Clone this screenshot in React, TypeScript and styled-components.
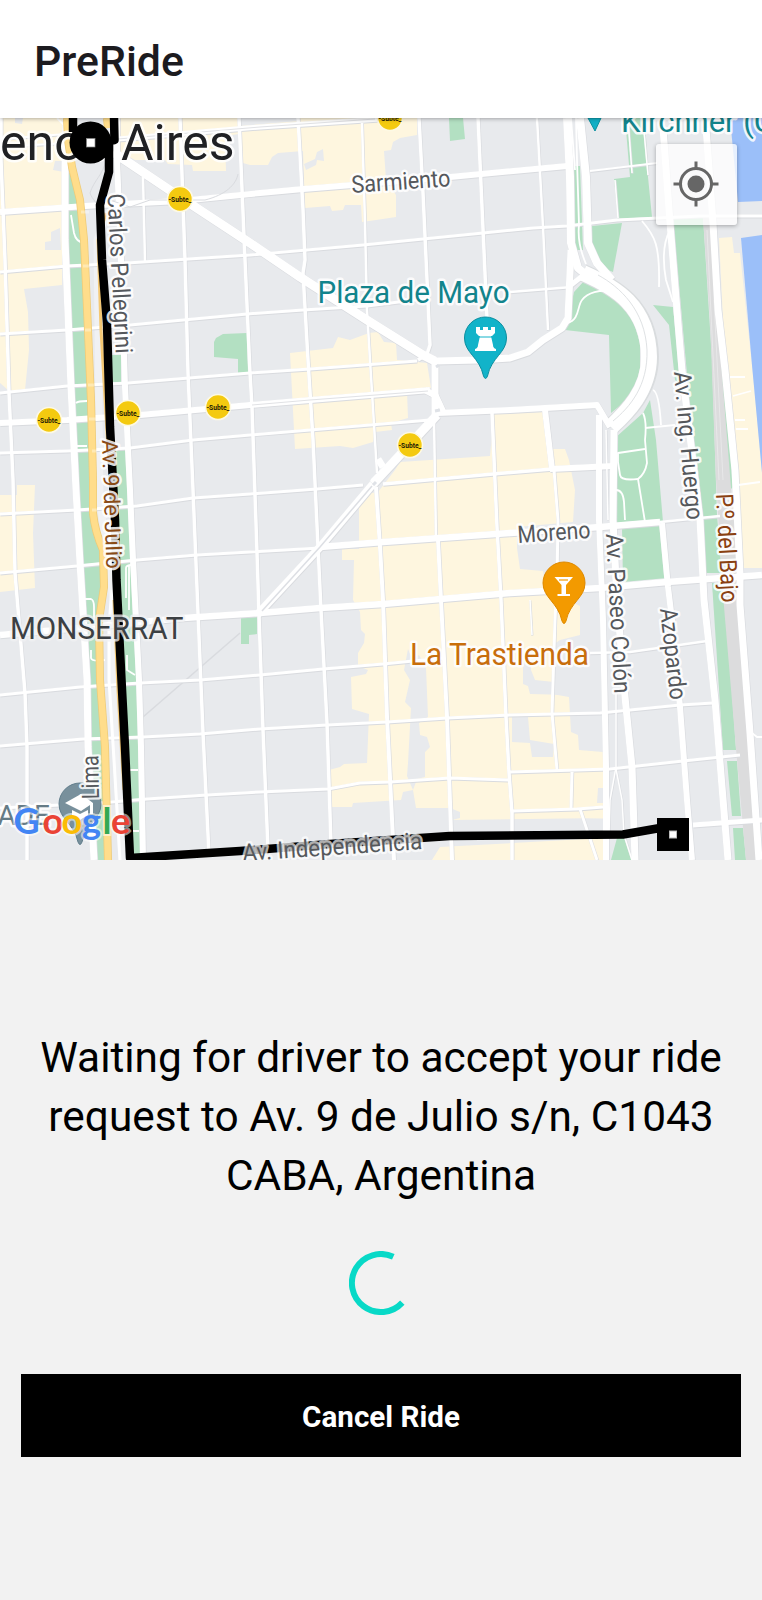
import React from "react";
import styled, { createGlobalStyle } from "styled-components";

const GlobalStyle = createGlobalStyle`
  * { box-sizing: border-box; }
  body { margin: 0; background: #f2f2f2; font-family: Roboto, "Liberation Sans", sans-serif; }
`;

const Screen = styled.main`
  display: flex;
  flex-direction: column;
  width: 762px;
  height: 1600px;
  overflow: hidden;
  background: #f2f2f2;
`;

const Header = styled.header`
  display: flex;
  align-items: center;
  flex: none;
  height: 118px;
  padding: 4px 34px 0;
  background: #fff;
  box-shadow: 0 1px 4px rgba(0, 0, 0, 0.3);
  z-index: 1;
`;

const Title = styled.h1`
  margin: 0;
  font-size: 42.8px;
  font-weight: 500;
  color: #1c1b1f;
`;

const MapPane = styled.section`
  position: relative;
  flex: none;
  height: 742px;
  overflow: hidden;
`;

const MapCanvas = styled.svg`
  display: block;
  width: 762px;
  height: 742px;
`;

const LocateButton = styled.button`
  position: absolute;
  top: 26px;
  right: 25px;
  width: 81px;
  height: 81px;
  padding: 0 1px 1px 0;
  display: flex;
  align-items: center;
  justify-content: center;
  border: 0;
  border-radius: 3px;
  background: rgba(255, 255, 255, 0.76);
  box-shadow: 0 1px 4px rgba(0, 0, 0, 0.3);
`;

const Panel = styled.section`
  display: flex;
  flex-direction: column;
  align-items: center;
  flex: 1;
  padding: 168px 21px 0;
`;

const Message = styled.p`
  margin: 0 0 46px;
  width: 700px;
  font-size: 42.4px;
  line-height: 59px;
  text-align: center;
  color: #000;
`;

const Spinner = styled.svg`
  display: block;
  width: 64px;
  height: 64px;
  margin-bottom: 59px;
`;

const CancelButton = styled.button`
  align-self: stretch;
  height: 83px;
  border: 0;
  padding: 3px 0 0;
  background: #000;
  color: #fff;
  font: 700 29.6px Roboto, "Liberation Sans", sans-serif;
`;

const Label = styled.text<{ $size?: number; $color?: string; $halo?: string }>`
  font-family: Roboto, "Liberation Sans", sans-serif;
  font-size: ${(p) => p.$size ?? 24}px;
  fill: ${(p) => p.$color ?? "#55585c"};
  stroke: ${(p) => p.$halo ?? "rgba(255,255,255,0.85)"};
  stroke-width: 5px;
  stroke-linejoin: round;
  paint-order: stroke;
`;

const StopText = styled.text`
  font: 700 8px Roboto, sans-serif;
  fill: #1d1a05;
`;

const LogoText = styled.text`
  font: 700 36px Lato, sans-serif;
  stroke: rgba(255, 255, 255, 0.55);
  stroke-width: 4px;
  paint-order: stroke;
`;

const YELLOW = "#fef6df";
const GREEN = "#b3e0c2";
const GREY = "#e8eaed";
const RAIL = "#dcdcdd";
const WATER = "#9bbff9";

const areas: [string, string][] = [
  [YELLOW, "0,118 62,118 62,285 24,289 28,312 29,350 25,390 9,391 0,383"],
  [GREY, "51,232 60,228 61,250 45,250 45,242 51,241"],
  [GREY, "15,118 23,118 22,124 15,123"],
  [GREY, "55,161 64,161 64,172 53,170"],
  [YELLOW, "117,118 417,118 417,135 400,138 393,142 391,150 384,151 386,180 396,195 396,217 376,220 362,222 361,205 345,205 343,210 332,211 330,206 305,208 303,151 278,153 272,157 268,165 250,165 243,163 239,134 225,136 226,171 193,171 192,165 168,164 165,160 135,160 117,150"],
  [GREY, "240,118 300,118 300,121 240,126"],
  [GREY, "323,149 324,161 317,160 316,165 306,170 304,164 315,159 317,152"],
  [YELLOW, "290,353 333,348 338,337 350,340 369,333 378,332 384,342 396,343 397,360 427,363 431,388 407,392 408,418 391,423 392,430 375,432 373,442 353,448 340,446 325,447 295,449"],
  [YELLOW, "395,470 400,462 490,456 494,414 545,412 549,449 565,449 569,460 575,490 573,522 517,527 517,548 520,569 543,571 546,590 580,606 580,635 560,640 553,645 552,694 569,697 571,732 578,735 579,750 603,752 603,860 432,860 440,847 603,838 603,818 452,820 460,818 460,812 450,808 416,808 413,790 403,792 401,800 353,803 352,807 332,807 329,770 340,767 344,764 367,763 369,714 352,709 351,677 366,674 368,670 358,666 358,653 364,643 365,634 361,630 360,612 353,600 354,560 342,560 342,549 359,549 359,495 378,492"],
  [GREY, "408,649 404,670 410,680 405,702 411,708 408,763 407,776 413,790 417,779 425,777 425,752 430,747 427,737 420,735 419,723 428,717 426,668 419,655 412,659"],
  [GREY, "523,660 531,662 531,670 535,680 554,682 570,690 570,695 530,694 528,686 523,684"],
  [GREY, "512,717 528,717 530,740 554,744 553,757 532,757 530,743 512,742"],
  [GREY, "598,788 603,788 603,803 597,803"],
  [YELLOW, "0,495 17,495 17,485 35,485 33,533 35,588 0,592"],
  [YELLOW, "719,238 732,237 734,253 740,253 752,365 762,470 762,568 742,568 725,360"],
  [WATER, "730,118 762,118 762,201 738,202"],
  [WATER, "741,238 762,235 762,473 752,365"],
  [GREEN, "66,173 72,173 82,210 85,300 89,400 93,500 97,530 104,555 103,600 98,625 100,700 106,760 108,860 94,860 88,747 80,563 71,387 67,300"],
  [GREEN, "112,355 121,355 121,382 112,382"],
  [GREEN, "113,450 126,450 130,500 134,560 141,720 141,860 130,860 121,670 115,520"],
  [GREEN, "214,342 216,338 223,334 247,333 248,373 238,373 238,359 214,357"],
  [GREEN, "241,618 257,617 257,634 249,635 249,644 241,644"],
  [GREEN, "449,118 463,118 465,139 450,141"],
  [GREEN, "572,166 580,166 583,250 575,250"],
  [GREEN, "592,226 622,223 613,272 600,267 592,247"],
  [GREEN, "625,118 645,118 648,177 652,217 618,219 614,179 630,177"],
  [GREEN, "585,280 610,292 630,310 640,343 640,375 633,395 611,413 609,335 565,330 574,292"],
  [GREEN, "643,413 650,400 656,440 663,522 615,523 615,438"],
  [GREEN, "622,527 660,525 667,578 623,582"],
  [GREEN, "653,305 673,307 681,385 675,380 669,325"],
  [GREEN, "673,218 703,217 712,360 717,515 722,573 704,573 700,520"],
  [GREEN, "712,583 722,583 727,620 736,750 723,750"],
  [GREEN, "727,761 737,761 741,816 732,816"],
  [GREEN, "733,828 743,828 746,860 735,860"],
  [GREEN, "617,838 625,838 633,860 611,860"],
  [GREEN, "713,300 721,310 735,485 730,490"],
  [RAIL, "703,217 713,220 716,280 718,322 724,400 731,488 740,590 750,750 758,860 746,860 737,760 722,583 716,480 713,400 710,320"],
];

const roads: [number, string][] = [
  [3.5, "1,118 1,160 5,260 9,393 13,480 15,573 25,693 27,747 27,860"],
  [7, "66,118 65,167 65,240 71,387 76,490 80,563 87,680 88,747 94,860"],
  [6, "117,118 117,160 121,260 125,387 130,490 133,560 139,680 141,747 143,860"],
  [2.5, "143,177 145,262"],
  [3.5, "180,118 185,260 188,373 193,490 198,613 203,733 209,855"],
  [3.5, "239,118 245,260 250,373 252,407 257,553 259,615 263,730 268,850"],
  [3.5, "298,118 303,210 305,260 303,273 308,360 313,440 318,547 321,610 327,723 331,845"],
  [2.5, "362,123 365,223 367,310 370,360 377,473"],
  [4, "376,487 380,547 383,600 387,717 394,860"],
  [3.5, "419,118 423,193 430,345 427,354 418,360"],
  [2.5, "434,420 436,540"],
  [4, "438,540 441,600 447,717 452,860"],
  [3.5, "478,118 487,318"],
  [3.5, "492,413 497,527 501,600 506,717 509,773 512,813 512,860"],
  [2.5, "537,118 543,227 548,330"],
  [6, "545,410 552,469"],
  [3, "554,470 558,520 557,580 555,620 552,713 557,770"],
  [1.5, "530,600 532,635"],
  [3, "572,772 571,809"],
  [3, "580,809 597,860"],
  [2, "0,139 66,134"],
  [2, "0,147 66,143"],
  [5, "118,139 260,127 380,119"],
  [6, "0,212 100,205 180,201 260,193 303,189 450,177 567,166"],
  [2, "590,171 657,163"],
  [3, "0,272 67,266 127,263 250,255 363,245 483,233 533,228 567,226 617,220 700,216 762,216"],
  [3, "0,334 67,330 130,325 247,314 303,310 367,306 430,298"],
  [2.5, "510,292 572,287"],
  [3, "0,393 67,386 128,383 250,373 310,369 417,361"],
  [6, "0,423 67,420 140,415 250,405 310,400 430,390"],
  [3, "0,453 67,451 130,448 193,440 250,435 310,430 430,420"],
  [3, "0,514 77,510 137,506 193,498 250,494 317,489 363,485"],
  [3.5, "383,484 493,474 552,469"],
  [6, "550,469 613,466"],
  [3, "0,573 77,566 137,560 197,555 250,552 320,548"],
  [6.5, "320,547 383,542 510,533 600,527 660,522"],
  [2.5, "660,522 720,516"],
  [6.5, "0,635 90,627 183,618 260,613 320,608 383,604 510,593 600,588 667,582 762,575"],
  [3, "0,695 80,687 140,683 200,680 260,675 323,669 383,664 443,658"],
  [2.5, "590,653 630,652 707,641"],
  [3, "0,746 83,739 143,737 200,734 260,729 327,725 387,722 447,718 510,715 600,713 680,705 713,703"],
  [3, "0,808 100,803 147,799 207,795 260,792 328,789 360,783 390,782 450,778 508,780"],
  [3, "510,772 610,769 683,761 740,755"],
  [3, "512,811 577,809 603,807"],
  [5, "693,825 762,820"],
  [9, "113,152 180,197 250,243 300,277 367,320 423,355 435,361"],
  [7, "435,361 435,418"],
  [6, "425,390 436,396 443,411"],
  [7, "435,361 478,360 510,358 528,352 543,340 562,328 568,318 571,250"],
  [6, "437,413 510,410 597,405 610,427"],
  [9, "437,415 373,484"],
  [8, "373,484 320,547 257,615"],
  [8, "567,118 570,177 571,243 578,268 590,278"],
  [8, "580,118 586,177 588,243 597,263 612,280"],
  [5, "571,285 590,270"],
  [6, "599,415 599,520 603,620 606,767 606,860"],
  [7, "614,430 613,520 617,600 625,697 632,767 635,860"],
  [1.5, "606,430 608,520"],
  [1.5, "616,693 616,767 610,800 609,835"],
  [1.5, "616,769 622,800 624,835 632,860"],
  [6, "662,523 668,587 672,620 680,707 687,800 692,860"],
  [7, "663,128 670,223 678,323 682,370 700,520 704,600 715,700 722,787 728,860"],
  [7, "706,128 713,223 718,310 725,370 735,470 740,573 740,605 750,733 759,860"],
  [1.5, "643,120 648,175"],
  [1.5, "628,120 632,173"],
  [1.5, "615,180 618,218"],
];

const parkPaths = [
  "M643 413Q647 421 645 440L647 463Q645 474 638 479L645 522",
  "M645 449L618 453V462L620 475Q621 481 638 479",
  "M616 490Q623 490 624 502L625 520",
  "M645 428L675 425M653 390Q659 392 661 425",
  "M567 323C580 320 577 306 582 300C588 292 600 290 610 291",
  "M642 221C655 236 660 245 659 287M670 230C663 243 662 258 666 280L673 302",
  "M84 599H91Q94 600 94 607V620M91 650V658Q92 662 105 660",
  "M126 598V568Q126 565 132 565M129 565V610M127 655V670L135 675",
  "M71 215L74 233Q76 242 84 243M76 403Q78 401 87 401M77 446H87M129 770H138M130 831H139M57 118L66 127",
  "M730 377H745M733 396L751 391M735 420H745M736 429H748M738 485L760 482M752 733L757 737H762",
  "M576 118L577 160L579 225Q577 243 586 264M571 118L575 170",
];

const stops: [number, number][] = [
  [180, 199], [49, 420], [128, 413], [218, 407], [410, 445], [390, 118],
];

const Pin = ({ x, y, fill, edge }: { x: number; y: number; fill: string; edge: string }) => (
  <path
    d={`M${x} ${y - 21}a21 21 0 0 1 21 21c0 15 -15 19 -19 38q-2 5 -4 0c-4 -19 -19 -23 -19 -38a21 21 0 0 1 21 -21Z`}
    fill={fill}
    stroke={edge}
    strokeWidth={1}
  />
);

const toPath = (pts: string) => "M" + pts.split(" ").join("L");

const CityMap = () => (
  <MapCanvas viewBox="0 118 762 742">
    <rect y={118} width={762} height={742} fill={GREY} />
    {areas.map(([fill, pts], i) => (
      <polygon key={i} points={pts} fill={fill} />
    ))}
    <path d="M714 300L723 480M707 230L719 480" stroke="#e8e8e9" strokeWidth={1} />
    <path d="M240 633L143 717" stroke="#d9dbdf" strokeWidth={1.5} />
    <g fill="none" strokeLinejoin="round">
      <path d="M107 212L97 240L100 500L113 600V700L122 860" stroke="#f0f1f3" strokeWidth={7} />
      {roads.map(([w, pts], i) => (
        <path key={i} d={toPath(pts)} stroke="#d9dbdf" strokeWidth={w + 0.6} transform="translate(.4 .6)" />
      ))}
      <path d="M583 273C615 287 649 306 650 357C650 391 626 413 611 427" stroke="#d9dcde" strokeWidth={18} />
      {roads.map(([w, pts], i) => (
        <path key={i} d={toPath(pts)} stroke="#fff" strokeWidth={w} />
      ))}
      <path d="M583 273C615 287 648 306 649 357C649 391 626 413 611 427" stroke="#fff" strokeWidth={16} />
      <path d="M598 275C620 287 645 310 647 350C648 386 630 407 613 421" stroke="#dfe2e4" strokeWidth={1} />
      {parkPaths.map((d) => (
        <path key={d} d={d} stroke="#fff" strokeWidth={1.8} />
      ))}
      <path d="M372 486L320 547L262 611" stroke="#dddfe4" strokeWidth={1.5} />
      <path d="M118 139L260 127L375 119M252 405L310 400L428 391" stroke="#e1e2e5" strokeWidth={1} />
      <path d="M373 482L385 470M378 459L383 467" stroke="#fff" strokeWidth={7} />
      <path d="M373 485l3 -3M435 411l5 -1M436 367l3 -2" stroke="#dfe2e7" strokeWidth={3} />
      <path d="M103 210C98 205 92 199 90 193C94 180 103 175 106 160M110 200L130 207L150 200L205 200C225 195 236 185 238 174" stroke="#d9dbdf" strokeWidth={1} />
      <path d="M112 590L109 625V680L114 760L120 860" stroke="#fff" strokeWidth={3} />
      <path d="M106 213L98 240L101 330L108 450M114 600L118 690L124 790" stroke="#f4c874" strokeWidth={3} />
      <path d="M67 118L68 140L72 167L80 200L84 240L87 307L91 400L93 480L93 513Q95 532 103 550L104 587L99 620L100 680L105 747L108 860M107 118L108 128" stroke="#eecb78" strokeWidth={8} />
      <path d="M67 118L68 140L72 167L80 200L84 240L87 307L91 400L93 480L93 513Q95 532 103 550L104 587L99 620L100 680L105 747L108 860M107 118L108 128" stroke="#ffdd8b" strokeWidth={6.5} />
      <path d="M81 212H89M83 266H90M85 330H91M88 385H94M89 419H96M92 451H97M92 510H97" stroke="#fff" strokeOpacity={0.35} strokeWidth={3} />
    </g>

    <Label x={0} y={160} textLength={234.5} $size={50} $color="#202124">enos Aires</Label>
    <g fill="none" stroke="#000" strokeWidth={8.5} strokeLinejoin="round">
      <path d="M73 118V132" />
      <path d="M114 118L114.500 140L109 141L109 172L100 205L102 260L107 323L110 427L115 520L116.500 580L121.500 680L125 747L130 858L240 851L330 844L450 836L623 834.500L660 828" />
    </g>
    <circle cx={90.500} cy={142.500} r={21} fill="#000" />
    <rect x={86.500} y={138.500} width={8.500} height={8.500} fill="#fff" stroke="#888" strokeWidth={0.7} />

    {stops.map(([x, y]) => (
      <g key={`${x}-${y}`}>
        <circle cx={x} cy={y} r={12.500} fill="#f4ca10" stroke="#fdf9e4" strokeWidth={1.6} />
        <StopText x={x} y={y + 2.500} textAnchor="middle" textLength={23} lengthAdjust="spacingAndGlyphs">-Subte_</StopText>
      </g>
    ))}

    <Label transform="translate(352 193) rotate(-4)" textLength={99} lengthAdjust="spacingAndGlyphs">Sarmiento</Label>
    <Label transform="translate(107.500 194) rotate(87)" textLength={160} lengthAdjust="spacingAndGlyphs">Carlos Pellegrini</Label>
    <Label transform="translate(102 440) rotate(88)" textLength={129} lengthAdjust="spacingAndGlyphs" $size={22} $color="#8a4b16">Av. 9 de Julio</Label>
    <Label transform="translate(674 372) rotate(85)" textLength={149} lengthAdjust="spacingAndGlyphs">Av. Ing. Huergo</Label>
    <Label transform="translate(606 534) rotate(87)" textLength={160} lengthAdjust="spacingAndGlyphs">Av. Paseo Colón</Label>
    <Label transform="translate(660 609) rotate(83.500)" textLength={92} lengthAdjust="spacingAndGlyphs">Azopardo</Label>
    <Label transform="translate(716 494) rotate(87)" textLength={109} lengthAdjust="spacingAndGlyphs" $color="#8a4010">P.º del Bajo</Label>
    <Label transform="translate(518 543) rotate(-4)" textLength={73} lengthAdjust="spacingAndGlyphs">Moreno</Label>
    <Label transform="translate(243 861) rotate(-3.800)" textLength={180} lengthAdjust="spacingAndGlyphs" $halo="rgba(255,255,255,.7)">Av. Independencia</Label>
    <Label x={10} y={638.5} textLength={173.5} lengthAdjust="spacingAndGlyphs" $size={31} $color="#3c4043" $halo="rgba(240,241,243,.75)">MONSERRAT</Label>
    <Label x={317.5} y={302.5} textLength={192} lengthAdjust="spacingAndGlyphs" $size={31} $color="#12848c">Plaza de Mayo</Label>
    <Label x={410} y={664.5} textLength={179} lengthAdjust="spacingAndGlyphs" $size={31} $color="#c86e0c">La Trastienda</Label>
    <Label x={621} y={132} $size={31} $color="#12848c">Kirchner (CCK)</Label>

    <path d="M588 118H601L595 131Z" fill="#12b0c6" stroke="#0c909e" />
    <Pin x={485.500} y={338} fill="#12b3c9" edge="#0b8e9f" />
    <path d="M476 327h4v3h3v-3h5v3h3v-3h4v6l-3 3h-13l-3 -3ZM480 336h11l2 9h-15ZM478 345h15q0 3 3 4v2h-21v-2q3 -1 3 -4Z" fill="#fff" />
    <path d="M478 337h15" stroke="#12b3c9" strokeWidth={1} />
    <Pin x={564} y={583} fill="#f39a00" edge="#de8900" />
    <path d="M554.500 577h18.500l-7 8v9h4v2h-12.500v-2h4v-9Z" fill="#fff" />
    <path d="M559 580h9" stroke="#f39a00" strokeWidth={1.2} />
    <Pin x={80} y={804} fill="#78909c" edge="#607d8b" />
    <path d="M65 803L81 794L93 803V814H90V805L81 811ZM72 810V815L80 820L88 815V810L80 814Z" fill="#fff" />
    <Label transform="translate(99 799) rotate(-91)" textLength={44} lengthAdjust="spacingAndGlyphs">Lima</Label>
    <Label x={50} y={825} textAnchor="end" $size={28} $color="#657b86">ADE</Label>

    <rect x={657} y={818} width={32} height={33} fill="#000" />
    <rect x={669.500} y={831} width={7} height={7} fill="#fff" stroke="#bbb" strokeWidth={1} />

    <LogoText y={834}>
      <tspan x={13.5} fill="#4285f4">G</tspan>
      <tspan x={42.5} fill="#ea4335">o</tspan>
      <tspan x={61.5} fill="#fbbc05">o</tspan>
      <tspan x={82} fill="#4285f4">g</tspan>
      <tspan x={102.5} fill="#34a853">l</tspan>
      <tspan x={111} fill="#ea4335">e</tspan>
    </LogoText>
  </MapCanvas>
);

export default function App() {
  return (
    <Screen>
      <GlobalStyle />
      <Header>
        <Title>PreRide</Title>
      </Header>
      <MapPane>
        <CityMap />
        <LocateButton aria-label="My location">
          <svg width={46} height={46} viewBox="0 0 46 46" fill="none" stroke="#666" strokeWidth={3}>
            <circle cx={23} cy={23} r={15.500} />
            <circle cx={23} cy={23} r={8.500} fill="#666" stroke="none" />
            <path d="M23 .500V8M23 38v7.500M.500 23H8M38 23h7.500" />
          </svg>
        </LocateButton>
      </MapPane>
      <Panel>
        <Message>Waiting for driver to accept your ride request to Av. 9 de Julio s/n, C1043 CABA, Argentina</Message>
        <Spinner viewBox="0 0 64 64">
          <path d="M44.300 5.800A29 29 0 1 0 53.300 51.600" fill="none" stroke="#08d9c7" strokeWidth={6} />
        </Spinner>
        <CancelButton>Cancel Ride</CancelButton>
      </Panel>
    </Screen>
  );
}
